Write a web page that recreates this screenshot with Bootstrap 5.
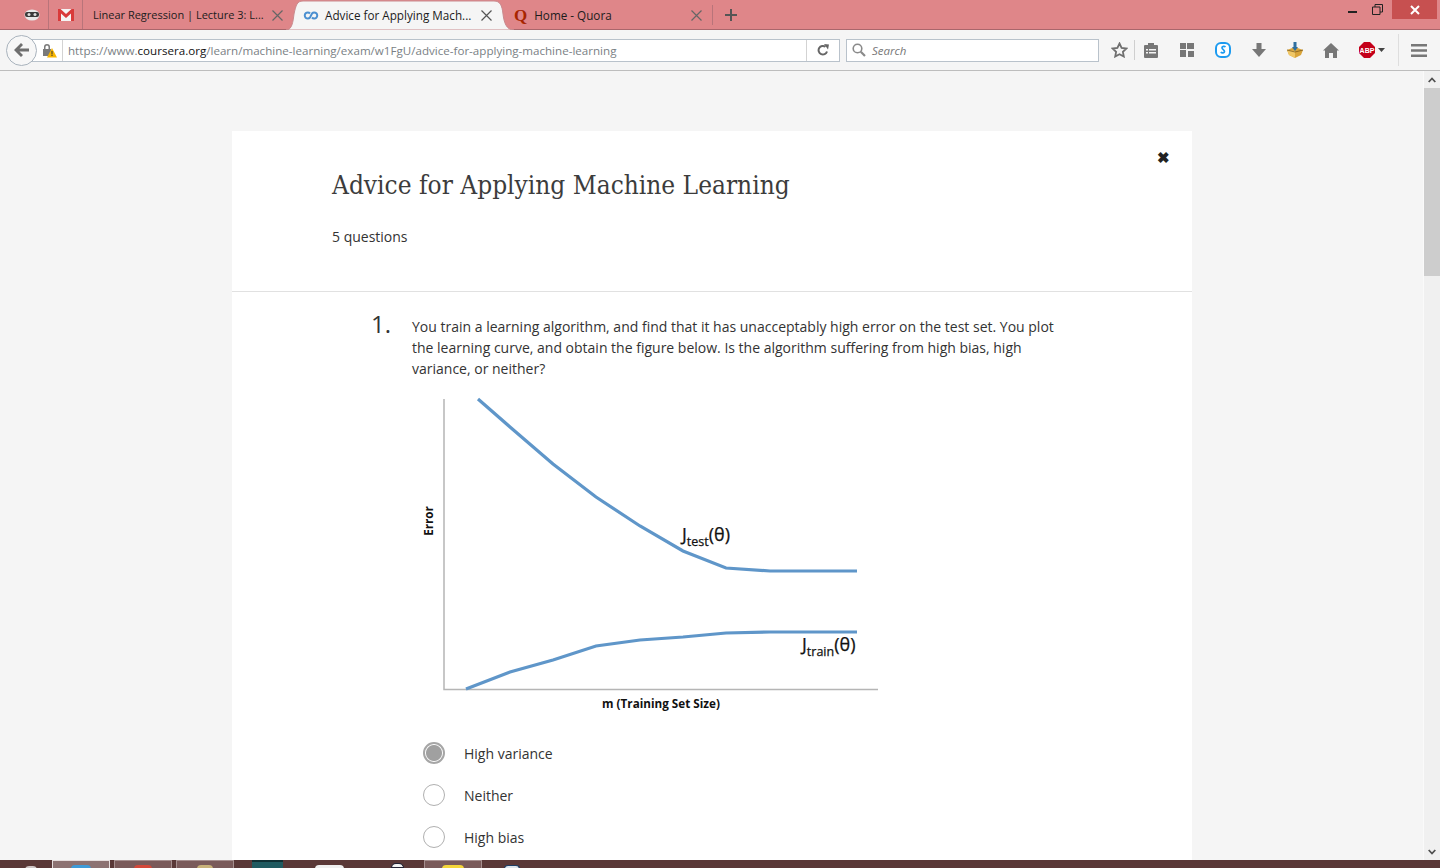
<!DOCTYPE html>
<html lang="en">
<head>
    <meta charset="UTF-8">
    <meta name="viewport" content="width=device-width, initial-scale=1.0">
    <title>Advice for Applying Machine Learning</title>
    <link href="https://cdn.jsdelivr.net/npm/bootstrap@5.3.3/dist/css/bootstrap.min.css" rel="stylesheet" crossorigin="anonymous">
    <style>
        html, body { height: 868px; overflow: hidden; }
        body { font-family: "Open Sans", sans-serif; font-size: 14px; color: #333; background: #f5f5f5; }

        /* browser tab strip */
        .tabstrip { height: 30px; background: #df8689; border-bottom: 1px solid #a9666b; padding-left: 15px; }
        .pin-tab { width: 34px; height: 29px; border-right: 1px solid #b9747a; }
        .b-tab { height: 29px; font-size: 11.7px; color: #1c1c1c; white-space: nowrap; padding-top: 1px; }
        .b-tab .tab-x { margin-left: auto; flex: none; }
        .tab-one { width: 208px; padding: 1px 8px 0 10px; font-size: 11px; }
        .tab-two { width: 216px; padding: 1px 15px 0 12px; height: 30px; position: relative; z-index: 2; }
        .tab-shape { position: absolute; left: -10px; top: 0; z-index: -1; }
        .tab-two .fav { margin-right: 6px; }
        .tab-three { width: 206px; padding: 1px 10px 0 7px; border-right: 1px solid #b9747a; height: 20px; margin-top: 5px; position: relative; z-index: 3; }
        .tab-three .fav { margin-right: 7px; font-family: "Liberation Serif", serif; font-weight: 700; font-size: 17px; color: #a82400; line-height: 18px; }
        .add-tab { width: 36px; height: 29px; }
        .win-btns { margin-left: auto; height: 19px; }
        .win-min { width: 40px; padding-top: 3px; }
        .win-close { width: 45px; height: 19px; background: #c75050; margin-left: 9px; margin-right: 3px; }

        /* toolbar */
        .tool-row { height: 41px; background: #f5f5f5; border-bottom: 1px solid #bdbdbd; padding-left: 6px; }
        .back-btn { width: 31px; height: 31px; border-radius: 50%; border: 1px solid #a9b3bd; background: #f7f7f7; margin-right: -7px; z-index: 2; position: relative; flex: none; }
        .url-box { width: 810px; height: 23px; background: #fff; border: 1px solid #b9c2cb; font-size: 11.6px; color: #7a7f85; flex: none; padding-left: 6px; }
        .url-box b { font-weight: 400; color: #111; }
        .url-box .url-text { padding-top: 1px; }
        .url-sec { width: 26px; height: 21px; border-right: 1px solid #d3d3d3; margin-right: 5px; flex: none; padding-right: 5px; }
        .url-reload { margin-left: auto; width: 33px; height: 21px; border-left: 1px solid #d3d3d3; }
        .search-box { width: 253px; height: 23px; background: #fff; border: 1px solid #b9c2cb; margin-left: 6px; font-size: 11.5px; font-style: italic; color: #777; padding-left: 5px; flex: none; }
        .search-box span { padding-top: 1px; }
        .star-btn { width: 36px; flex: none; border-right: 1px solid #cfcfcf; height: 20px; margin-right: -2px; padding-left: 6px; }
        .tool-btn { width: 36px; height: 30px; flex: none; }
        .menu-btn { width: 41px; height: 32px; border-left: 1px solid #dedede; margin-left: 13px; flex: none; }

        /* page */
        .page-wrap { height: 789px; overflow: hidden; }
        .page-main { flex: 1; padding: 60px 0 0 232px; overflow: hidden; }
        .exam-sheet { width: 960px; height: 800px; background: #fff; position: relative; }
        .exam-head { height: 161px; padding: 37px 100px 0; border-bottom: 1px solid #e1e1e1; }
        .exam-title { font-family: "DejaVu Serif Condensed", "DejaVu Serif", serif; font-size: 26px; font-weight: 400; line-height: 34px; color: #3c3c3c; margin: 0 0 25px; }
        .exam-count { font-size: 14px; line-height: 20px; color: #333; }
        .close-x { position: absolute; top: 17px; right: 22px; font-size: 15px; line-height: 18px; font-weight: 700; color: #222; }
        .q-body { padding: 17px 0 0 139px; }
        .q-num { width: 41px; font-size: 24px; line-height: 30px; color: #333; flex: none; }
        .q-text { width: 650px; font-size: 14px; line-height: 21px; margin-top: 7px; color: #333; }
        .chart-box { display: block; margin: 17px 0 0 41px; }
        .ans-list { margin: 16px 0 0 52px; }
        .ans-row { height: 42px; font-size: 14px; }
        .ans-row .form-check-input { width: 22px; height: 22px; margin: 0 19px 0 0; border: 1px solid #b0b0b0; background-image: none; background-color: #fff; flex: none; }
        .ans-row .form-check-input:checked { border: 2px solid #a6a6a6; background-color: #fff; background-image: radial-gradient(circle, #a0a0a0 7.5px, #fff 8.5px); }

        /* scrollbar */
        .scroll-col { width: 17px; background: #f0f0f0; border-left: 1px solid #fafafa; flex: none; height: 789px; }
        .scroll-arrow { height: 17px; }
        .scroll-thumb { height: 188px; background: #cdcdcd; }

        /* taskbar */
        .task-row { height: 8px; background: #5a3837; overflow: hidden; padding-left: 25px; }
        .task-item { width: 58px; height: 8px; background: #7a5a5a; border: 1px solid #a58e8e; border-bottom: 0; flex: none; margin-right: 4px; padding-top: 4px; }
        .task-item.on { background: #8d7272; border-color: #e6dddd; }
        .task-peek { height: 4px; border-radius: 6px 6px 0 0; margin: 0 auto; }
        .task-plain { height: 8px; flex: none; padding-top: 5px; }
        .peek-start { width: 12px; margin-right: 15px; padding-top: 6px; }
        .peek-term { width: 31px; padding: 0; border-top: 2px solid #0f2f33; background: #1f5a60; margin: 0 32px 0 14px; }
        .peek-white { width: 29px; margin-right: 47px; }
        .peek-doc { width: 13px; padding-top: 3px; margin-right: 20px; }
        .peek-shield { width: 16px; margin-left: 18px; padding-top: 5px; }
    </style>
</head>
<body class="d-flex flex-column m-0">

    <div class="tabstrip d-flex align-items-start">
        <div class="pin-tab d-flex align-items-center justify-content-center">
            <svg width="16" height="12" viewBox="0 0 16 12"><ellipse cx="8" cy="6" rx="7.500" ry="5.500" fill="#e8e8e8"/><rect x="1" y="3" width="14" height="5" rx="2" fill="#3a3a3a"/><circle cx="5" cy="5.500" r="1.500" fill="#ddd"/><circle cx="11" cy="5.500" r="1.500" fill="#ddd"/></svg>
        </div>
        <div class="pin-tab d-flex align-items-center justify-content-center">
            <svg width="16" height="12" viewBox="0 0 16 12"><rect width="16" height="12" fill="#f4f4f4"/><path d="M0 0h2.500L8 5l5.500-5H16v12h-3V4.500L8 9 3 4.500V12H0z" fill="#d93a3a"/></svg>
        </div>
        <div class="b-tab tab-one d-flex align-items-center">
            <span>Linear Regression | Lecture 3: L...</span>
            <svg class="tab-x" width="11" height="11" viewBox="0 0 11 11"><path d="M.5.5l10 10M10.500.5l-10 10" stroke="#666" stroke-width="1.200" fill="none"/></svg>
        </div>
        <div class="b-tab tab-two d-flex align-items-center">
            <svg class="tab-shape" width="233" height="30" viewBox="0 0 233 30"><path d="M5 30C11 30 12 22 13 14C15 5 16 1 22 1H213C219 1 221 5 222 14C223 22 225 30 233 30Z" fill="#f5f5f5" stroke="#c98a8e" stroke-width="1"/></svg>
            <svg class="fav" width="16" height="9" viewBox="0 0 16 9"><path d="M7 2.500A3 3 0 1 0 7 6.500L9 2.500A3 3 0 1 1 9 6.500" stroke="#4b8fd0" stroke-width="2" fill="none"/></svg>
            <span>Advice for Applying Mach...</span>
            <svg class="tab-x" width="11" height="11" viewBox="0 0 11 11"><path d="M.5.5l10 10M10.500.5l-10 10" stroke="#555" stroke-width="1.200" fill="none"/></svg>
        </div>
        <div class="b-tab tab-three d-flex align-items-center">
            <span class="fav">Q</span>
            <span>Home - Quora</span>
            <svg class="tab-x" width="11" height="11" viewBox="0 0 11 11"><path d="M.5.5l10 10M10.500.5l-10 10" stroke="#666" stroke-width="1.200" fill="none"/></svg>
        </div>
        <div class="add-tab d-flex align-items-center justify-content-center">
            <svg width="12" height="12" viewBox="0 0 12 12"><path d="M6 0v12M0 6h12" stroke="#555" stroke-width="2"/></svg>
        </div>
        <div class="win-btns d-flex align-items-center">
            <div class="win-min d-flex justify-content-center"><svg width="9" height="3" viewBox="0 0 9 3"><rect width="9" height="2" y="1" fill="#222"/></svg></div>
            <svg width="11" height="11" viewBox="0 0 11 11"><path d="M.5 3h7.500v7.500H.5zM3 3V.5h7.500V8H8" fill="none" stroke="#222"/></svg>
            <div class="win-close d-flex align-items-center justify-content-center"><svg width="10" height="10" viewBox="0 0 10 10"><path d="M1 1l8 8M9 1L1 9" stroke="#fff" stroke-width="2"/></svg></div>
        </div>
    </div>

    <div class="tool-row d-flex align-items-center">
        <div class="back-btn d-flex align-items-center justify-content-center">
            <svg width="15" height="14" viewBox="0 0 15 14"><path d="M7 0l2 2-3.500 3.500H15v3H5.500L9 12l-2 2L0 7z" fill="#6f6f6f"/></svg>
        </div>
        <div class="url-box d-flex align-items-center">
            <div class="url-sec d-flex align-items-center justify-content-end">
                <svg width="16" height="15" viewBox="0 0 16 15"><path d="M3 6V4a3 3 0 0 1 6 0v2h1v7H2V6zm1.500 0h3V4a1.500 1.500 0 0 0-3 0z" fill="#7a7a7a"/><path d="M11 5l5 9.500H6z" fill="#f7b500"/><rect x="10.500" y="8" width="1" height="3.500" fill="#333"/><rect x="10.500" y="12" width="1" height="1" fill="#333"/></svg>
            </div>
            <span class="url-text">https://www.<b>coursera.org</b>/learn/machine-learning/exam/w1FgU/advice-for-applying-machine-learning</span>
            <div class="url-reload d-flex align-items-center justify-content-center">
                <svg width="12" height="12" viewBox="0 0 12 12"><path d="M10 7.500A4.300 4.300 0 1 1 8.500 2.800" fill="none" stroke="#666" stroke-width="2"/><path d="M7 0l5 .5-1 5z" fill="#666"/></svg>
            </div>
        </div>
        <div class="search-box d-flex align-items-center" style="gap:6px">
            <svg width="14" height="14" viewBox="0 0 14 14"><circle cx="5.500" cy="5.500" r="4.300" fill="none" stroke="#8a8a8a" stroke-width="1.600"/><path d="M8.800 8.800L13 13" stroke="#8a8a8a" stroke-width="2.200"/></svg>
            <span>Search</span>
        </div>
        <div class="star-btn d-flex align-items-center justify-content-center">
            <svg width="17" height="16" viewBox="0 0 17 16"><path d="M8.500 1.500l2.100 4.400 4.800.6-3.500 3.300.9 4.700-4.300-2.300-4.300 2.300.9-4.700L1.600 6.500l4.800-.6z" fill="#f5f5f5" stroke="#6f6f6f" stroke-width="1.800"/></svg>
        </div>
        <div class="tool-btn d-flex align-items-center justify-content-center">
            <svg width="14" height="15" viewBox="0 0 14 15"><path d="M1 2h3V0h6v2h3a1 1 0 0 1 1 1v11a1 1 0 0 1-1 1H1a1 1 0 0 1-1-1V3a1 1 0 0 1 1-1z" fill="#777"/><path d="M2 6h2v1.500H2zm3 0h7v1.500H5zM2 9h2v1.500H2zm3 0h7v1.500H5z" fill="#f5f5f5"/></svg>
        </div>
        <div class="tool-btn d-flex align-items-center justify-content-center">
            <svg width="14" height="14" viewBox="0 0 14 14"><path d="M0 0h6v6H0zM7 0h7v6H7zM0 7h6v7H0zM8 8h6v6H8z" fill="#777"/></svg>
        </div>
        <div class="tool-btn d-flex align-items-center justify-content-center">
            <svg width="16" height="16" viewBox="0 0 16 16"><rect x="1" y="1" width="14" height="14" rx="5" fill="#fff" stroke="#1d9bf0" stroke-width="2"/><path d="M10.500 5c-1-1-3.500-.8-3.500.8 0 1.700 2.500 2 2.500 3.700 0 1.600-2.500 1.800-3.800.7" fill="none" stroke="#1d9bf0" stroke-width="1.700"/></svg>
        </div>
        <div class="tool-btn d-flex align-items-center justify-content-center">
            <svg width="14" height="14" viewBox="0 0 14 14"><path d="M4.500 0h5v6H14l-7 8-7-8h4.500z" fill="#777"/></svg>
        </div>
        <div class="tool-btn d-flex align-items-center justify-content-center">
            <svg width="16" height="16" viewBox="0 0 16 16"><path d="M8 5l8 3-2 5-6 3-6-3-2-5z" fill="#d9a43a"/><path d="M8 9v7l-6-3-2-5z" fill="#f0c766"/><path d="M0 8l8 2 8-2" stroke="#7a5a20" fill="none" stroke-width=".8"/><path d="M6.500 0h3v5H11L8 9 5 5h1.500z" fill="#2f6f9f"/></svg>
        </div>
        <div class="tool-btn d-flex align-items-center justify-content-center">
            <svg width="16" height="15" viewBox="0 0 16 15"><path d="M8 0l8 7.500h-2V15h-4v-5H6v5H2V7.500H0z" fill="#777"/></svg>
        </div>
        <div class="tool-btn d-flex align-items-center" style="padding-left:10px">
            <svg width="26" height="16" viewBox="0 0 26 16"><path d="M5 0h6l5 5v6l-5 5H5l-5-5V5z" fill="#c4001a"/><text x="8" y="10.500" text-anchor="middle" font-family="Liberation Sans, sans-serif" font-size="7" font-weight="700" fill="#fff">ABP</text><path d="M19 6h7l-3.500 4z" fill="#444"/></svg>
        </div>
        <div class="menu-btn d-flex align-items-center justify-content-center">
            <svg width="16" height="13" viewBox="0 0 16 13"><path d="M0 0h16v2.600H0zM0 5.200h16v2.600H0zM0 10.400h16V13H0z" fill="#777"/></svg>
        </div>
    </div>

    <div class="page-wrap d-flex">
        <div class="page-main">
            <div class="exam-sheet">
                <div class="close-x">&#10006;</div>
                <div class="exam-head">
                    <h1 class="exam-title">Advice for Applying Machine Learning</h1>
                    <div class="exam-count">5 questions</div>
                </div>
                <div class="q-body">
                    <div class="d-flex">
                        <div class="q-num">1.</div>
                        <div class="q-text">You train a learning algorithm, and find that it has unacceptably high error on the test set. You plot the learning curve, and obtain the figure below. Is the algorithm suffering from high bias, high variance, or neither?</div>
                    </div>
                    <svg class="chart-box" width="480" height="320" viewBox="412 396 480 320">
                        <path d="M444 399v290.500H878" fill="none" stroke="#b5b5b5" stroke-width="1.500"/>
                        <path d="M478 399l32 28 43 37 43 33 44 29 43 25 43 17 44 3h87" fill="none" stroke="#5f96c9" stroke-width="3.200"/>
                        <path d="M466 689l44-17 43-12 43-14 44-6 43-3 43-4 44-1h87" fill="none" stroke="#5f96c9" stroke-width="3.200"/>
                        <text x="682" y="541" font-family="Open Sans, sans-serif" font-size="18" fill="#111" stroke="#111" stroke-width=".25">J<tspan font-size="12.500" dy="5">test</tspan><tspan dy="-5">(θ)</tspan></text>
                        <text x="802" y="651" font-family="Open Sans, sans-serif" font-size="18" fill="#111" stroke="#111" stroke-width=".25">J<tspan font-size="12.500" dy="5">train</tspan><tspan dy="-5">(θ)</tspan></text>
                        <text x="661" y="708" text-anchor="middle" font-family="Open Sans, sans-serif" font-size="11.700" font-weight="700" fill="#111">m (Training Set Size)</text>
                        <text transform="translate(433 521) rotate(-90)" text-anchor="middle" font-family="Open Sans, sans-serif" font-size="11.700" font-weight="700" fill="#111">Error</text>
                    </svg>
                    <div class="ans-list">
                        <label class="ans-row d-flex align-items-center"><input class="form-check-input" type="radio" name="q1" checked>High variance</label>
                        <label class="ans-row d-flex align-items-center"><input class="form-check-input" type="radio" name="q1">Neither</label>
                        <label class="ans-row d-flex align-items-center"><input class="form-check-input" type="radio" name="q1">High bias</label>
                    </div>
                </div>
            </div>
        </div>
        <div class="scroll-col d-flex flex-column align-items-stretch">
            <div class="scroll-arrow d-flex align-items-center justify-content-center"><svg width="8" height="6" viewBox="0 0 8 6"><path d="M.7 5L4 1.500 7.300 5" fill="none" stroke="#505050" stroke-width="1.800"/></svg></div>
            <div class="scroll-thumb"></div>
            <div class="scroll-arrow mt-auto d-flex align-items-center justify-content-center"><svg width="8" height="6" viewBox="0 0 8 6"><path d="M.7 1L4 4.500 7.300 1" fill="none" stroke="#505050" stroke-width="1.800"/></svg></div>
        </div>
    </div>

    <div class="task-row d-flex">
        <div class="task-plain peek-start"><div class="task-peek w-100" style="background:#cfc6c6"></div></div>
        <div class="task-item on"><div class="task-peek" style="width:20px;background:#3f9bd8"></div></div>
        <div class="task-item"><div class="task-peek" style="width:18px;background:#d5483a"></div></div>
        <div class="task-item"><div class="task-peek" style="width:16px;background:#c9b27a"></div></div>
        <div class="task-plain peek-term"></div>
        <div class="task-plain peek-white"><div class="task-peek w-100" style="background:#efefef"></div></div>
        <div class="task-plain peek-doc"><div class="task-peek w-100" style="height:5px;background:#f2f2f2;border:1px solid #223"></div></div>
        <div class="task-item"><div class="task-peek" style="width:22px;background:#f5d63a"></div></div>
        <div class="task-plain peek-shield"><div class="task-peek w-100" style="background:#dfe6ee;border:1px solid #1d3f66"></div></div>
    </div>

    <script src="https://cdn.jsdelivr.net/npm/bootstrap@5.3.3/dist/js/bootstrap.bundle.min.js" crossorigin="anonymous"></script>
</body>
</html>
